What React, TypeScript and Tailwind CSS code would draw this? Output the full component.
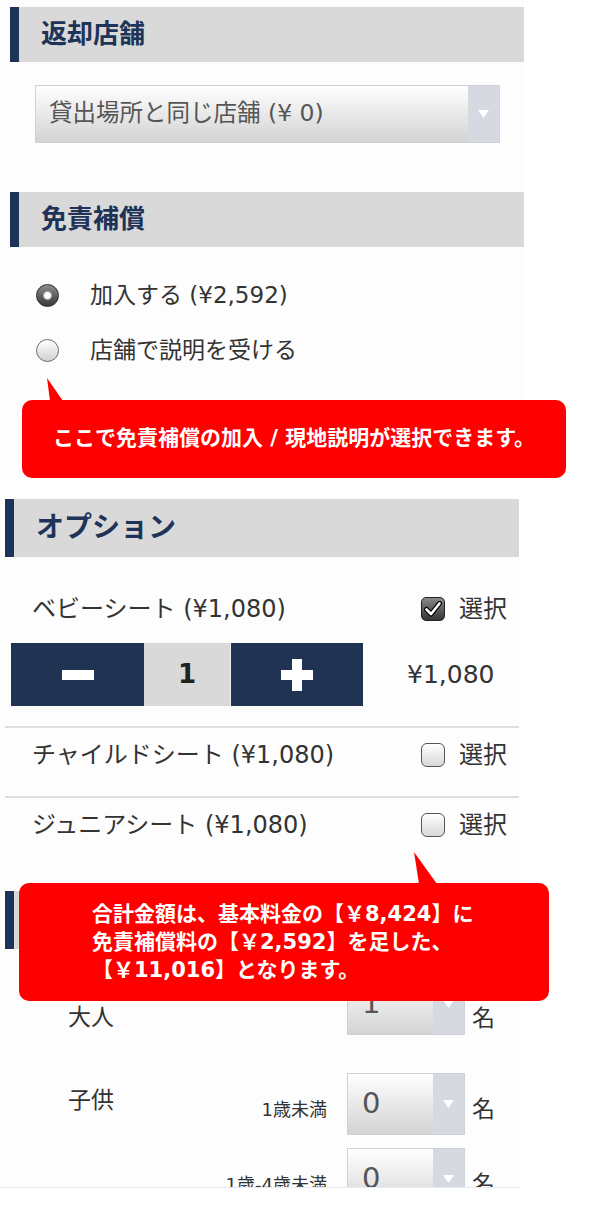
import React from 'react';

const font = 'font-["DejaVu_Sans","Noto_Sans_CJK_JP",sans-serif]';

function SectionHeader({ title, className = '' }: { title: string; className?: string }) {
  return (
    <div
      className={`flex items-center bg-[#d9d9d9] border-l-[9px] border-[#1e3358] text-[#1e3358] font-bold ${className}`}
    >
      {title}
    </div>
  );
}

function SelectBox({ value, className = '', textClass = '' }: { value: string; className?: string; textClass?: string }) {
  return (
    <div className={`flex border border-[#cdd1d8] ${className}`}>
      <div className={`flex-1 flex items-center bg-gradient-to-b from-white to-[#d3d3d3] text-[#555] ${textClass}`}>
        {value}
      </div>
      <div className="w-[31px] flex items-center justify-center bg-[#d6d9df]">
        <svg width="11" height="8" viewBox="0 0 11 8">
          <polygon points="0,0 11,0 5.5,8" fill="#ffffff" />
        </svg>
      </div>
    </div>
  );
}

function Radio({ checked }: { checked: boolean }) {
  if (checked) {
    return (
      <div className="w-[23px] h-[23px] rounded-full border border-[#2c2c2c] bg-gradient-to-b from-[#8c8c8c] to-[#3a3a3a] flex items-center justify-center">
        <div className="w-[9px] h-[9px] rounded-full bg-white border border-[#aaa]" />
      </div>
    );
  }
  return <div className="w-[23px] h-[23px] rounded-full border border-[#6a6a6a] bg-gradient-to-b from-white to-[#d2d2d2]" />;
}

function Checkbox({ checked }: { checked: boolean }) {
  if (checked) {
    return (
      <div className="w-[24px] h-[24px] rounded-[5px] border border-[#222] bg-gradient-to-b from-[#8a8a8a] to-[#353535] flex items-center justify-center">
        <svg width="18" height="16" viewBox="0 0 18 16">
          <path d="M2.5 8.5 L7 13 L15.5 2.5" fill="none" stroke="#000" strokeWidth="5" strokeLinecap="round" strokeLinejoin="round" />
          <path d="M2.5 8.5 L7 13 L15.5 2.5" fill="none" stroke="#fff" strokeWidth="2.6" strokeLinecap="round" strokeLinejoin="round" />
        </svg>
      </div>
    );
  }
  return <div className="w-[24px] h-[24px] rounded-[6px] border border-[#555] bg-gradient-to-b from-white to-[#d8d8d8]" />;
}

function OptionRow({ label, checked }: { label: string; checked: boolean }) {
  return (
    <div className="flex items-center pl-[32px] text-[24px] text-[#333]">
      <div className="w-[389px] leading-[24px]">{label}</div>
      <Checkbox checked={checked} />
      <span className="ml-[14px] leading-[24px]">選択</span>
    </div>
  );
}

export default function App() {
  return (
    <div className={`w-[600px] min-h-[1212px] bg-white ${font}`}>
      {/* 返却店舗 / 免責補償 */}
      <div className="w-[524px] bg-[#fdfdfd] pt-[7px]">
        <SectionHeader title="返却店舗" className="ml-[10px] w-[514px] h-[55px] pl-[22px] text-[26px]" />
        <SelectBox
          value="貸出場所と同じ店舗 (¥ 0)"
          className="ml-[35px] mt-[23px] w-[465px] h-[58px]"
          textClass="pl-[13px] text-[23.5px]"
        />

        <SectionHeader title="免責補償" className="ml-[10px] mt-[49px] w-[514px] h-[55px] pl-[22px] text-[26px]" />
        <div className="pl-[36px] text-[23px] text-[#333]">
          <div className="flex items-center h-[24px] mt-[36px]">
            <Radio checked />
            <span className="ml-[31px] leading-[24px]">加入する (¥2,592)</span>
          </div>
          <div className="flex items-center h-[24px] mt-[31px]">
            <Radio checked={false} />
            <span className="ml-[31px] leading-[24px]">店舗で説明を受ける</span>
          </div>
        </div>

        {/* callout 1 */}
        <div className="relative ml-[22px] mt-[38px] w-[544px] h-[78px] rounded-[10px] bg-[#ff0000] flex items-center justify-center text-white font-bold text-[21px]">
          <svg className="absolute left-[25px] top-[-22px]" width="16" height="23" viewBox="0 0 16 23">
            <polygon points="0,0 3,23 16,23" fill="#ff0000" />
          </svg>
          ここで免責補償の加入 / 現地説明が選択できます。
        </div>
      </div>

      {/* オプション */}
      <div className="relative mt-[21px]">
        <div className="w-[519px] h-[689px] overflow-hidden bg-[#fdfdfd] border-b border-[#e3ecf5]">
          <SectionHeader title="オプション" className="ml-[5px] w-[514px] h-[58px] pl-[22px] text-[28px]" />

          <div className="mt-[40px]">
            <OptionRow label="ベビーシート (¥1,080)" checked />
          </div>

          <div className="flex items-center mt-[22px] ml-[11px]">
            <div className="flex h-[63px]">
              <div className="w-[133px] bg-[#213353] flex items-center justify-center">
                <div className="w-[32px] h-[10px] bg-white" />
              </div>
              <div className="w-[87px] bg-[#d9d9d9] border-r border-[#eee] flex items-center justify-center text-[26px] font-bold text-[#222]">
                1
              </div>
              <div className="w-[132px] bg-[#213353] flex items-center justify-center">
                <svg width="32" height="32" viewBox="0 0 32 32">
                  <rect x="11" y="0" width="10" height="32" fill="#fff" />
                  <rect x="0" y="11" width="32" height="10" fill="#fff" />
                </svg>
              </div>
            </div>
            <span className="ml-[44px] text-[25px] text-[#333]">¥1,080</span>
          </div>

          <div className="mt-[20px] ml-[5px] h-[2px] bg-[#dedede]" />
          <div className="h-[68px] pb-[14px] flex items-center">
            <div className="w-full">
              <OptionRow label="チャイルドシート (¥1,080)" checked={false} />
            </div>
          </div>
          <div className="ml-[5px] h-[2px] bg-[#dedede]" />
          <div className="h-[68px] pb-[14px] flex items-center">
            <div className="w-full">
              <OptionRow label="ジュニアシート (¥1,080)" checked={false} />
            </div>
          </div>

          {/* header hidden under the callout */}
          <SectionHeader title="" className="ml-[5px] mt-[25px] w-[514px] h-[58px]" />

          <div className="text-[23px] text-[#333]">
            {/* 大人 */}
            <div className="flex items-start mt-[24px]">
              <div className="w-[347px] pl-[68px]">
                <div className="mt-[33px] leading-[23px]">大人</div>
              </div>
              <SelectBox value="1" className="w-[118px] h-[62px]" textClass="pl-[14px] text-[29px]" />
              <div className="ml-[7px] mt-[34px] leading-[23px]">名</div>
            </div>

            {/* 子供 */}
            <div className="flex items-start mt-[38px]">
              <div className="w-[347px] pl-[68px] pr-[20px] flex justify-between">
                <div className="mt-[16px] leading-[23px]">子供</div>
                <div className="mt-[28px] text-[18px] leading-[18px]">1歳未満</div>
              </div>
              <SelectBox value="0" className="w-[118px] h-[62px]" textClass="pl-[14px] text-[29px]" />
              <div className="ml-[7px] mt-[25px] leading-[23px]">名</div>
            </div>

            <div className="flex items-start mt-[13px]">
              <div className="w-[347px] pr-[20px] flex justify-end">
                <div className="mt-[28px] text-[18px] leading-[18px]">1歳-4歳未満</div>
              </div>
              <SelectBox value="0" className="w-[118px] h-[62px]" textClass="pl-[14px] text-[29px]" />
              <div className="ml-[7px] mt-[25px] leading-[23px]">名</div>
            </div>
          </div>
        </div>

        {/* callout 2 */}
        <div className="absolute left-[19px] top-[384px] w-[530px] h-[118px] rounded-[10px] bg-[#ff0000] pl-[73px] pt-[17px] text-white font-bold text-[21px] leading-[28px]">
          <svg className="absolute left-[395px] top-[-31px]" width="23" height="32" viewBox="0 0 23 32">
            <polygon points="0,0 5,32 23,32" fill="#ff0000" />
          </svg>
          <div>合計金額は、基本料金の【￥8,424】に</div>
          <div>免責補償料の【￥2,592】を足した、</div>
          <div>【￥11,016】となります。</div>
        </div>
      </div>
    </div>
  );
}
